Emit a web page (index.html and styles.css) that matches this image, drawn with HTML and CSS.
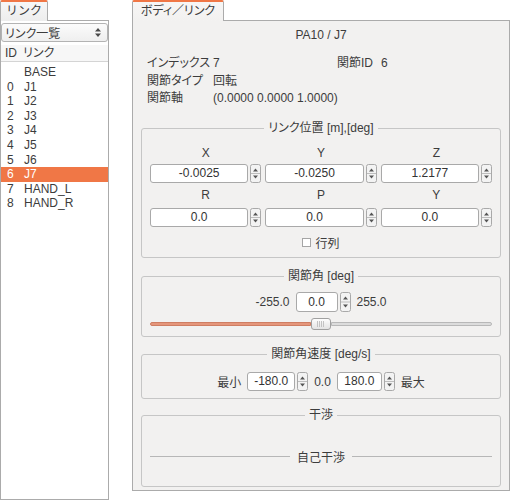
FILE: index.html
```html
<!DOCTYPE html>
<html lang="ja">
<head>
<meta charset="utf-8">
<title>Body / Link</title>
<link rel="stylesheet" href="styles.css">
</head>
<body>
<div class="app">
  <section class="dock dock-left">
    <div class="tabs"><div class="tab tab-left">リンク</div></div>
    <div class="pane pane-left">
      <div class="combo"><span>リンク一覧</span><svg class="combo-arrow" width="6" height="9" viewBox="0 0 6 9"><path d="M0 3.5 L6 3.5 L3 0 Z M0 5.5 L6 5.5 L3 9 Z" fill="#4a4a4a"/></svg></div>
      <div class="list-head"><span class="h-id">ID</span><span class="h-name">リンク</span></div>
      <ul class="list">
        <li class="row"><span class="c-id"></span><span class="c-name">BASE</span></li>
        <li class="row"><span class="c-id">0</span><span class="c-name">J1</span></li>
        <li class="row"><span class="c-id">1</span><span class="c-name">J2</span></li>
        <li class="row"><span class="c-id">2</span><span class="c-name">J3</span></li>
        <li class="row"><span class="c-id">3</span><span class="c-name">J4</span></li>
        <li class="row"><span class="c-id">4</span><span class="c-name">J5</span></li>
        <li class="row"><span class="c-id">5</span><span class="c-name">J6</span></li>
        <li class="row sel"><span class="c-id">6</span><span class="c-name">J7</span></li>
        <li class="row"><span class="c-id">7</span><span class="c-name">HAND_L</span></li>
        <li class="row"><span class="c-id">8</span><span class="c-name">HAND_R</span></li>
      </ul>
    </div>
  </section>

  <section class="dock dock-right">
    <div class="tabs"><div class="tab tab-right">ボディ／リンク</div></div>
    <div class="pane pane-right">
      <div class="title">PA10 / J7</div>
      <div class="info">
        <span class="k">インデックス</span><span class="v">7</span><span class="k2">関節ID</span><span class="v2">6</span>
        <span class="k">関節タイプ</span><span class="v">回転</span>
        <span class="k">関節軸</span><span class="v wide">(0.0000 0.0000 1.0000)</span>
      </div>

      <fieldset class="group g-pos">
        <legend>リンク位置 [m],[deg]</legend>
        <div class="axes">
          <div class="ax">X</div><div class="ax">Y</div><div class="ax">Z</div>
          <div class="spin"><div class="edit">-0.0025</div><svg class="arrows" width="11" height="19" viewBox="0 0 11 19"><rect x="0.5" y="0.5" width="10" height="18" rx="2" fill="#f3f3f3" stroke="#a9a9a9"/><line x1="1" y1="9.5" x2="10" y2="9.5" stroke="#bdbdbd"/><path d="M3 7.5 L8 7.5 L5.5 4.5 Z M3 11.5 L8 11.5 L5.5 14.5 Z" fill="#555"/></svg></div>
          <div class="spin"><div class="edit">-0.0250</div><svg class="arrows" width="11" height="19" viewBox="0 0 11 19"><rect x="0.5" y="0.5" width="10" height="18" rx="2" fill="#f3f3f3" stroke="#a9a9a9"/><line x1="1" y1="9.5" x2="10" y2="9.5" stroke="#bdbdbd"/><path d="M3 7.5 L8 7.5 L5.5 4.5 Z M3 11.5 L8 11.5 L5.5 14.5 Z" fill="#555"/></svg></div>
          <div class="spin"><div class="edit">1.2177</div><svg class="arrows" width="11" height="19" viewBox="0 0 11 19"><rect x="0.5" y="0.5" width="10" height="18" rx="2" fill="#f3f3f3" stroke="#a9a9a9"/><line x1="1" y1="9.5" x2="10" y2="9.5" stroke="#bdbdbd"/><path d="M3 7.5 L8 7.5 L5.5 4.5 Z M3 11.5 L8 11.5 L5.5 14.5 Z" fill="#555"/></svg></div>
          <div class="ax">R</div><div class="ax">P</div><div class="ax">Y</div>
          <div class="spin"><div class="edit">0.0</div><svg class="arrows" width="11" height="19" viewBox="0 0 11 19"><rect x="0.5" y="0.5" width="10" height="18" rx="2" fill="#f3f3f3" stroke="#a9a9a9"/><line x1="1" y1="9.5" x2="10" y2="9.5" stroke="#bdbdbd"/><path d="M3 7.5 L8 7.5 L5.5 4.5 Z M3 11.5 L8 11.5 L5.5 14.5 Z" fill="#555"/></svg></div>
          <div class="spin"><div class="edit">0.0</div><svg class="arrows" width="11" height="19" viewBox="0 0 11 19"><rect x="0.5" y="0.5" width="10" height="18" rx="2" fill="#f3f3f3" stroke="#a9a9a9"/><line x1="1" y1="9.5" x2="10" y2="9.5" stroke="#bdbdbd"/><path d="M3 7.5 L8 7.5 L5.5 4.5 Z M3 11.5 L8 11.5 L5.5 14.5 Z" fill="#555"/></svg></div>
          <div class="spin"><div class="edit">0.0</div><svg class="arrows" width="11" height="19" viewBox="0 0 11 19"><rect x="0.5" y="0.5" width="10" height="18" rx="2" fill="#f3f3f3" stroke="#a9a9a9"/><line x1="1" y1="9.5" x2="10" y2="9.5" stroke="#bdbdbd"/><path d="M3 7.5 L8 7.5 L5.5 4.5 Z M3 11.5 L8 11.5 L5.5 14.5 Z" fill="#555"/></svg></div>
        </div>
        <div class="check"><span class="box"></span><span>行列</span></div>
      </fieldset>

      <fieldset class="group g-angle">
        <legend>関節角 [deg]</legend>
        <div class="inline-row">
          <span>-255.0</span>
          <div class="spin spin-angle"><div class="edit">0.0</div><svg class="arrows" width="11" height="20" viewBox="0 0 11 20"><rect x="0.5" y="0.5" width="10" height="19" rx="2" fill="#f3f3f3" stroke="#a9a9a9"/><line x1="1" y1="10" x2="10" y2="10" stroke="#bdbdbd"/><path d="M3 7.5 L8 7.5 L5.5 4.5 Z M3 12.5 L8 12.5 L5.5 15.5 Z" fill="#555"/></svg></div>
          <span>255.0</span>
        </div>
        <div class="slider">
          <div class="groove groove-done"></div>
          <div class="handle"></div>
          <div class="groove groove-rest"></div>
        </div>
      </fieldset>

      <fieldset class="group g-vel">
        <legend>関節角速度 [deg/s]</legend>
        <div class="inline-row">
          <span>最小</span>
          <div class="spin spin-min"><div class="edit">-180.0</div><svg class="arrows" width="11" height="19" viewBox="0 0 11 19"><rect x="0.5" y="0.5" width="10" height="18" rx="2" fill="#f3f3f3" stroke="#a9a9a9"/><line x1="1" y1="9.5" x2="10" y2="9.5" stroke="#bdbdbd"/><path d="M3 7.5 L8 7.5 L5.5 4.5 Z M3 11.5 L8 11.5 L5.5 14.5 Z" fill="#555"/></svg></div>
          <span>0.0</span>
          <div class="spin spin-max"><div class="edit">180.0</div><svg class="arrows" width="11" height="19" viewBox="0 0 11 19"><rect x="0.5" y="0.5" width="10" height="18" rx="2" fill="#f3f3f3" stroke="#a9a9a9"/><line x1="1" y1="9.5" x2="10" y2="9.5" stroke="#bdbdbd"/><path d="M3 7.5 L8 7.5 L5.5 4.5 Z M3 11.5 L8 11.5 L5.5 14.5 Z" fill="#555"/></svg></div>
          <span>最大</span>
        </div>
      </fieldset>

      <fieldset class="group g-coll">
        <legend>干渉</legend>
        <div class="separator"><span class="sep-line"></span><span>自己干渉</span><span class="sep-line"></span></div>
      </fieldset>
    </div>
  </section>
</div>
</body>
</html>
```

FILE: styles.css
```css
* { box-sizing: border-box; }

html, body {
  margin: 0;
  padding: 0;
  background: #ffffff;
}

body {
  font-family: "Liberation Sans", "Noto Sans CJK JP", sans-serif;
  font-size: 12px;
  color: #3c3c3c;
  font-feature-settings: "palt";
}

.app {
  display: flex;
  align-items: flex-start;
  width: 510px;
  height: 500px;
}

.dock { display: flex; flex-direction: column; }
.dock-left { width: 109px; }
.dock-right { width: 378px; margin-left: 23px; }

.tabs { height: 20px; display: flex; }

.tab {
  position: relative;
  z-index: 1;
  height: 21px;
  border: 1px solid #ababab;
  border-top: 2px solid #f07746;
  border-bottom: none;
  border-radius: 2px 2px 0 0;
  line-height: 18px;
  text-align: center;
  background: linear-gradient(#f7f7f7, #ededed);
}

.tab-left { width: 48px; font-feature-settings: normal; }
.tab-right { width: 92px; background: linear-gradient(#f7f6f5, #f2f1f0); }

.pane {
  border: 1px solid #ababab;
}

.pane-left {
  height: 480px;
  background: #ffffff;
}

.combo {
  display: flex;
  align-items: center;
  height: 19px;
  margin-top: 2px;
  padding-left: 3px;
  border: 1px solid #b3b3b3;
  border-radius: 3px;
  background: linear-gradient(#fbfbfb, #efefef);
}

.combo-arrow { margin-left: auto; margin-right: 6px; }

.list-head {
  display: flex;
  height: 17px;
  margin-top: 3px;
  line-height: 16px;
  border-bottom: 1px solid #d4d4d4;
  background: #f7f7f7;
}

.h-id { width: 22px; padding-left: 4px; }

.list {
  list-style: none;
  margin: 0;
  padding: 3px 0 0 0;
}

.row {
  display: flex;
  height: 14.6px;
  line-height: 14.6px;
}

.c-id { width: 23px; padding-left: 6px; }

.row.sel {
  background: #f07746;
  color: #ffffff;
}

.pane-right {
  background: #f2f1f0;
  padding: 0 8px 3px 8px;
}

.title {
  margin-top: 6px;
  line-height: 16px;
  text-align: center;
}

.info {
  display: grid;
  grid-template-columns: 66px 124px 44px 1fr;
  margin: 12px 0 0 6px;
  line-height: 17.5px;
  white-space: nowrap;
}

.info .k { grid-column: 1; }
.info .wide { grid-column: 2 / 5; }

.group {
  margin: 0;
  min-width: 0;
  border: 1px solid #c6c6c6;
  border-radius: 3px;
  padding: 0 8px;
}

.group legend {
  margin: 0 auto;
  padding: 0 4px;
  line-height: 16px;
}

.g-pos { margin-top: 12.5px; padding-bottom: 7px; }
.g-angle { margin-top: 10px; padding-bottom: 6px; }
.g-vel { margin-top: 9px; padding-bottom: 7px; }
.g-coll { margin-top: 8px; padding-bottom: 22px; }

.axes {
  display: grid;
  grid-template-columns: repeat(3, 1fr);
  grid-template-rows: 16px 22px 20px 24px;
  column-gap: 4px;
  margin-top: 9px;
}

.ax {
  align-self: end;
  text-align: center;
  line-height: 16px;
}

.spin {
  align-self: end;
  display: flex;
  gap: 2px;
  height: 19px;
}

.edit {
  flex: 1;
  min-width: 0;
  background: #ffffff;
  border: 1px solid #a9a9a9;
  border-radius: 3px;
  text-align: center;
  line-height: 17px;
  color: #333333;
}

.arrows { flex: none; display: block; }

.check {
  display: flex;
  justify-content: center;
  align-items: center;
  gap: 4px;
  height: 16px;
  margin-top: 7px;
}

.check .box {
  width: 9px;
  height: 9px;
  border: 1px solid #a5a5a5;
  background: #ffffff;
}

.inline-row {
  display: flex;
  justify-content: center;
  align-items: center;
  gap: 6px;
}

.g-angle .inline-row { margin-top: 8px; height: 20px; }
.g-vel .inline-row { margin-top: 10px; height: 19px; }

.spin-angle { width: 55px; height: 20px; }
.spin-angle .edit { line-height: 18px; }
.spin-min { width: 61px; }
.spin-max { width: 58px; }

.slider {
  display: flex;
  align-items: center;
  height: 12px;
  margin-top: 6px;
}

.groove {
  flex: 1;
  height: 4px;
}

.groove-done {
  background: #e5967b;
  border: 1px solid #cf7e63;
  border-radius: 2px 0 0 2px;
}

.groove-rest {
  background: #dcdcdc;
  border: 1px solid #b8b8b8;
  border-radius: 0 2px 2px 0;
}

.handle {
  width: 20px;
  height: 12px;
  border: 1px solid #a0a0a0;
  border-radius: 3px;
  background:
    repeating-linear-gradient(90deg, #c3c3c3 0 1px, transparent 1px 2px) center / 8px 6px no-repeat,
    linear-gradient(#fdfdfd, #e3e3e3);
}

.separator {
  display: flex;
  align-items: center;
  gap: 7px;
  height: 16px;
  margin-top: 25px;
}

.sep-line {
  flex: 1;
  height: 1px;
  background: #b7b7b7;
}
```
